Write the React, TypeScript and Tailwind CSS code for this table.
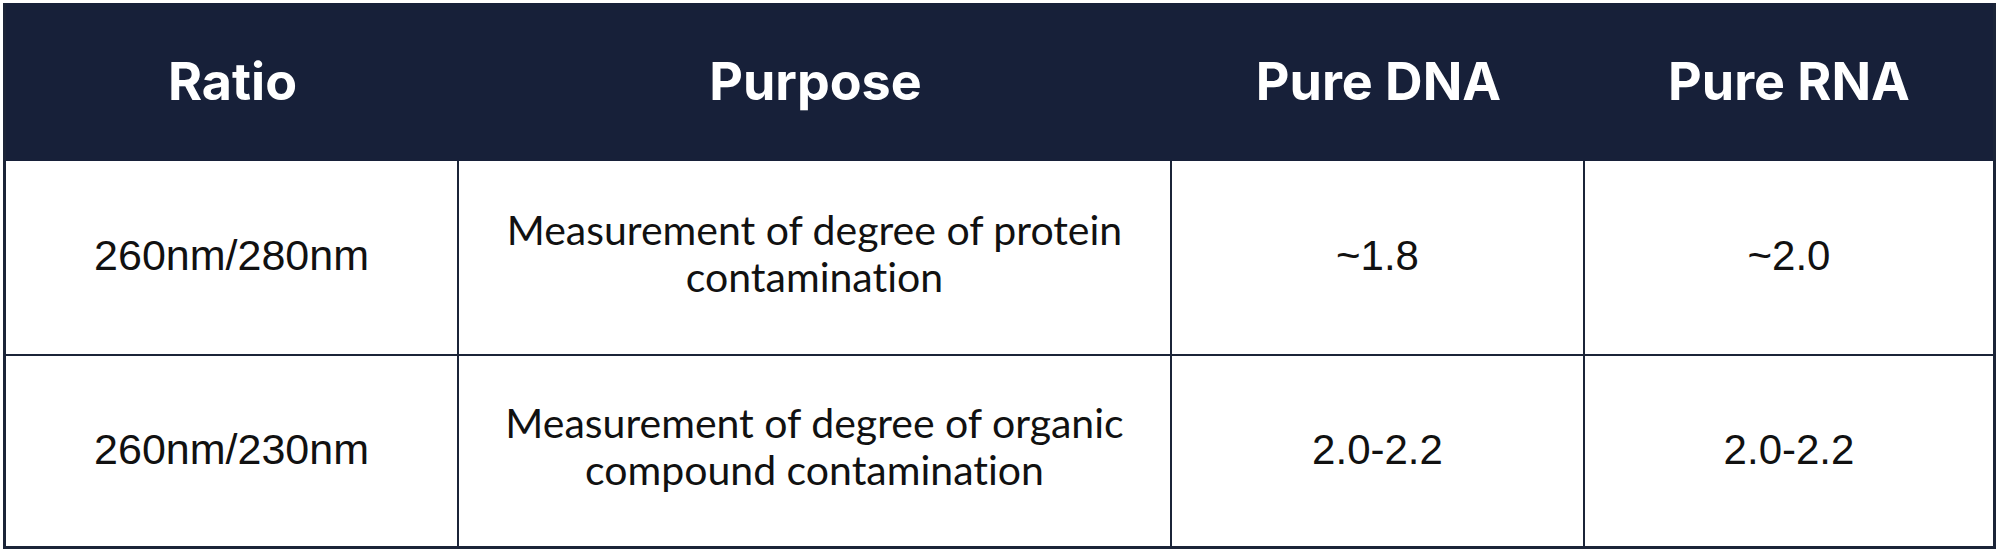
const rows = [
  {
    ratio: "260nm/280nm",
    purpose: ["Measurement of degree of protein", "contamination"],
    dna: "~1.8",
    rna: "~2.0",
    h: "h-[195px]",
  },
  {
    ratio: "260nm/230nm",
    purpose: ["Measurement of degree of organic", "compound contamination"],
    dna: "2.0-2.2",
    rna: "2.0-2.2",
    h: "h-[193px] border-b-[3px]",
  },
];

const cols = "grid grid-cols-[453px_713px_413px_411px]";
const cell = "flex items-center justify-center text-center border-[#1b2438]";
const plain = "font-['Liberation_Sans',Arial,sans-serif] text-[42px] pb-[4px]";

export default function App() {
  return (
    <div className="w-[2000px] h-[553px] bg-white pt-[3px] pl-[3px]">
      <div className="w-[1993px] border-l-[3px] border-[#1b2438]">
        <div className={`${cols} h-[158px] bg-[#172039] text-white font-['Inter',sans-serif] font-bold text-[52px]`}>
          <div className={cell}>Ratio</div>
          <div className={cell}>Purpose</div>
          <div className={cell}>Pure DNA</div>
          <div className={`${cell} border-r-[3px]`}>Pure RNA</div>
        </div>
        {rows.map((r) => (
          <div key={r.ratio} className={`${cols} text-[#111111]`}>
            <div className={`${cell} ${r.h} border-r-2 border-b-2 ${plain} text-[43px]`}>{r.ratio}</div>
            <div className={`${cell} ${r.h} border-r-2 border-b-2 font-['Lato',sans-serif] text-[41px] leading-[47px] [font-variant-ligatures:none] pb-[10px]`}>
              <span>
                {r.purpose[0]}
                <br />
                {r.purpose[1]}
              </span>
            </div>
            <div className={`${cell} ${r.h} border-r-2 border-b-2 ${plain}`}>{r.dna}</div>
            <div className={`${cell} ${r.h} border-r-[3px] border-b-2 ${plain}`}>{r.rna}</div>
          </div>
        ))}
      </div>
    </div>
  );
}
